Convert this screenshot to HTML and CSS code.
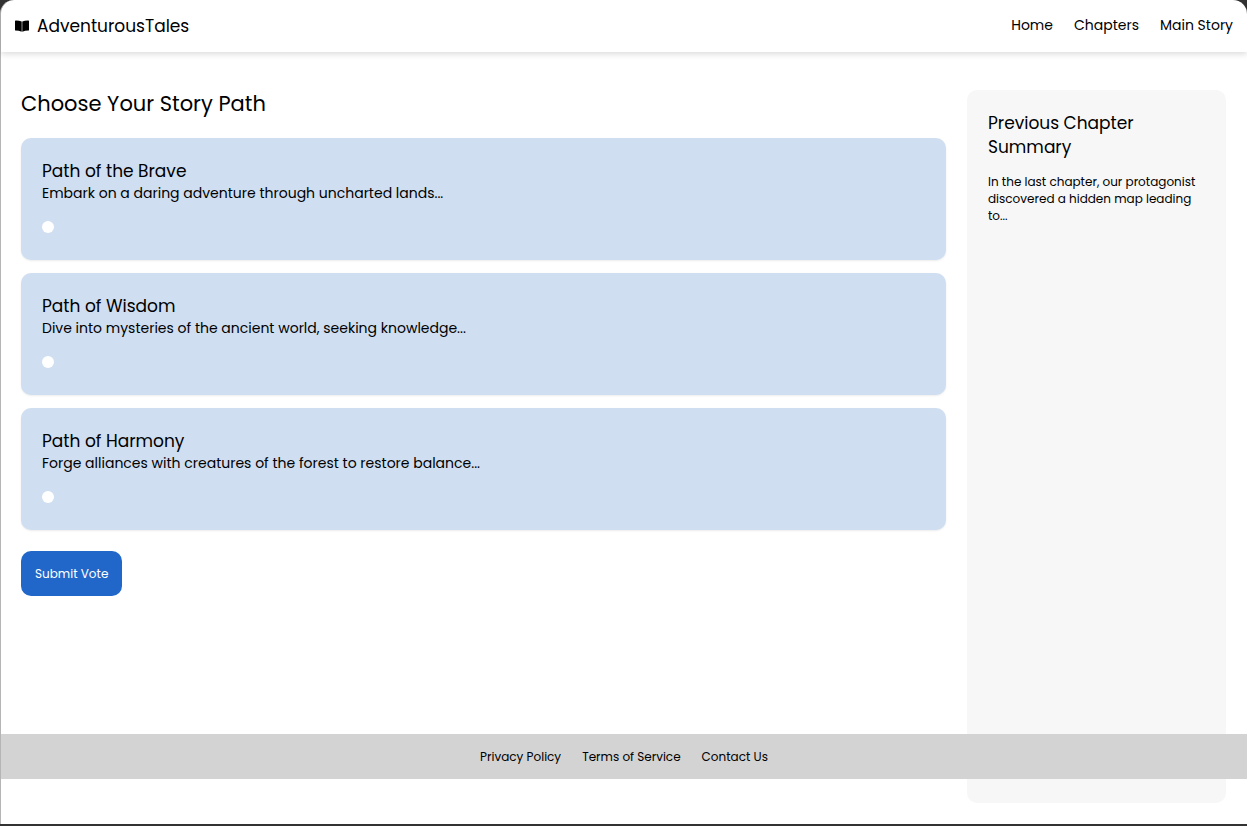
FILE: index.html
```html
<!DOCTYPE html>
<html lang="en">
<head>
<meta charset="utf-8">
<title>AdventurousTales</title>
<meta name="viewport" content="width=device-width, initial-scale=1">
<link rel="stylesheet" href="styles.css">
</head>
<body>
<div class="window">
  <header class="header">
    <div class="brand">
      <svg class="brand-icon" viewBox="0 0 14 12" aria-hidden="true">
        <path d="M0 1.2Q0 .6.6.6Q4 .5 6.7 1.5V11.7Q4 10.6.5 10.6Q0 10.6 0 10Z"/>
        <path d="M14 1.2Q14 .6 13.4.6Q10 .5 7.3 1.5V11.7Q10 10.6 13.5 10.6Q14 10.6 14 10Z"/>
      </svg>
      <span class="brand-name">AdventurousTales</span>
    </div>
    <nav class="nav">
      <a href="#home">Home</a>
      <a href="#chapters">Chapters</a>
      <a href="#story">Main Story</a>
    </nav>
  </header>
  <div class="layout">
    <main class="main">
      <h1 class="title">Choose Your Story Path</h1>
      <form class="vote">
        <div class="cards">
          <label class="card">
            <span class="card-title">Path of the Brave</span>
            <span class="card-text">Embark on a daring adventure through uncharted lands...</span>
            <input class="radio" type="radio" name="path" value="brave">
          </label>
          <label class="card">
            <span class="card-title">Path of Wisdom</span>
            <span class="card-text">Dive into mysteries of the ancient world, seeking knowledge...</span>
            <input class="radio" type="radio" name="path" value="wisdom">
          </label>
          <label class="card">
            <span class="card-title">Path of Harmony</span>
            <span class="card-text">Forge alliances with creatures of the forest to restore balance...</span>
            <input class="radio" type="radio" name="path" value="harmony">
          </label>
        </div>
        <button class="submit" type="button">Submit Vote</button>
      </form>
    </main>
    <aside class="summary">
      <h2 class="summary-title">Previous Chapter Summary</h2>
      <p class="summary-text">In the last chapter, our protagonist discovered a hidden map leading to...</p>
    </aside>
  </div>
  <footer class="footer">
    <a href="#privacy">Privacy Policy</a>
    <a href="#terms">Terms of Service</a>
    <a href="#contact">Contact Us</a>
  </footer>
</div>
</body>
</html>
```
FILE: styles.css
```css
* { box-sizing: border-box; }

body {
  margin: 0;
  display: flex;
  min-height: 100vh;
  padding-bottom: 2px;
  background: #333;
  color: #000;
  font-family: Poppins, Inter, sans-serif;
  font-size: 14px;
}

a { color: inherit; text-decoration: none; }

.window {
  position: relative;
  flex: 1;
  display: flex;
  flex-direction: column;
  background: #fff;
  border-left: 1px solid #b5b5b5;
  border-radius: 14px 14px 0 0;
}

.header {
  display: flex;
  align-items: center;
  justify-content: space-between;
  height: 52px;
  padding: 0 14px;
  border-radius: 14px 14px 0 0;
  box-shadow: 0 2px 6px rgba(0, 0, 0, 0.15);
}

.brand { display: flex; align-items: center; gap: 8px; }
.brand-icon { width: 14px; height: 12px; }
.brand-name { font-size: 17px; line-height: 24px; }
.nav { display: flex; gap: 21px; padding-bottom: 2px; line-height: 20px; }

.layout {
  flex: 1;
  display: grid;
  grid-template-columns: 1fr 259px;
  gap: 21px;
  padding: 38px 21px 21px 20px;
}

.title {
  margin: 0 0 20px;
  font-size: 21px;
  font-weight: 400;
  line-height: 28px;
}

.cards { display: flex; flex-direction: column; gap: 13px; }

.card {
  display: flex;
  flex-direction: column;
  padding: 21px;
  background: #cfdef1;
  border-radius: 10px;
  box-shadow: 0 1px 2px rgba(0, 0, 0, 0.08);
}

.card-title { font-size: 17px; line-height: 24px; }
.card-text { line-height: 21px; }

.radio {
  appearance: none;
  width: 12px;
  height: 12px;
  margin: 17px 0 6px;
  border-radius: 50%;
  background: #fff;
}

.radio:checked { border: 3px solid #2167c9; }

.submit {
  height: 45px;
  margin-top: 21px;
  padding: 0 14px;
  border: 0;
  border-radius: 10px;
  background: #2167c9;
  color: #fff;
  font-family: inherit;
  font-size: 12px;
}

.summary {
  padding: 21px;
  background: #f7f7f7;
  border-radius: 10px;
}

.summary-title {
  margin: 0 0 14px;
  font-size: 17px;
  font-weight: 400;
  line-height: 24px;
}

.summary-text { margin: 0; font-size: 12px; line-height: 17px; }

.footer {
  position: absolute;
  right: 0;
  bottom: 45px;
  left: 0;
  display: flex;
  align-items: center;
  justify-content: center;
  gap: 21px;
  height: 45px;
  background: #d3d3d3;
  font-size: 12px;
}
```
